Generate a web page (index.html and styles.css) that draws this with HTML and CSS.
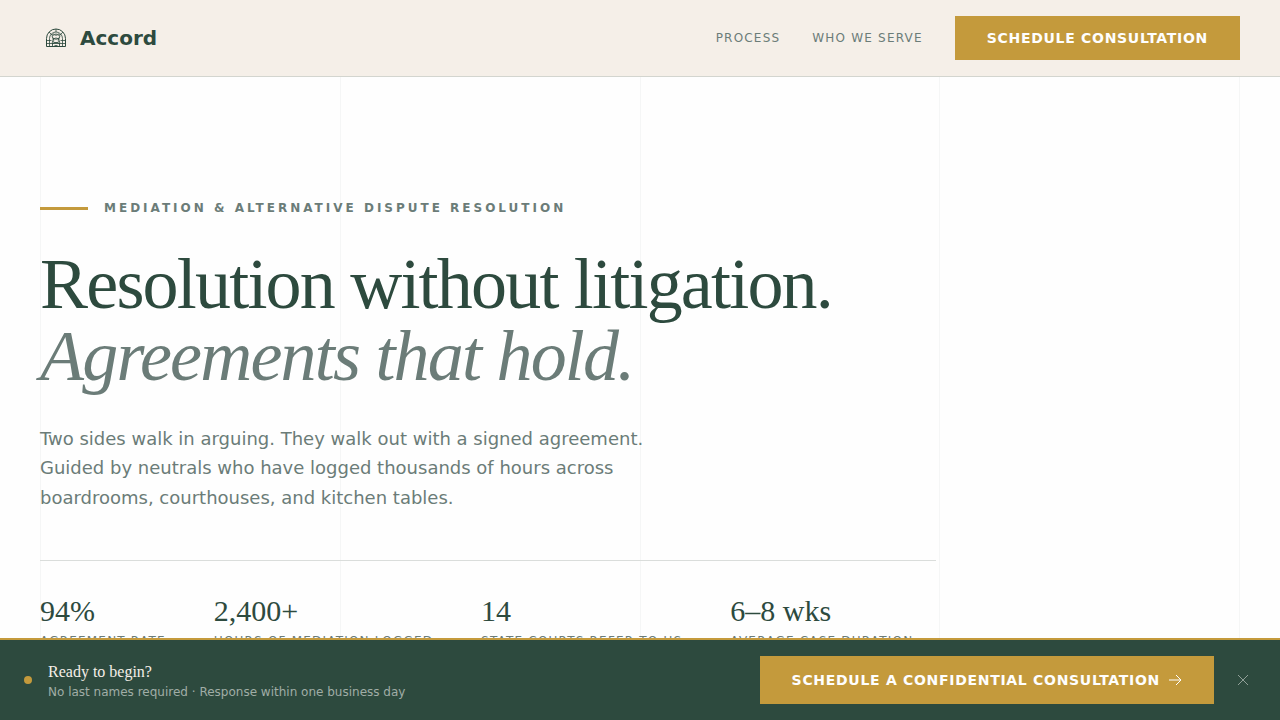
FILE: index.html
```
<!DOCTYPE html>
<html lang="en">
<head>
    <meta charset="utf-8">
    <meta name="viewport" content="width=device-width, initial-scale=1">
    <title>Accord</title>
    <link rel="stylesheet" href="styles.css">
</head>
<body>
    <header class="site-header">
        <a class="brand" href="#">
            <svg class="brand-icon" viewBox="0 0 24 24" fill="none" stroke="currentColor" aria-hidden="true">
                <path d="M2.500 20.500V12.500a9.500 9.500 0 0 1 19 0v8z"/>
                <g stroke-width="0.8">
                    <path d="M5.500 20.500v-8a6.500 6.500 0 0 1 13 0v8"/>
                    <path d="M2.500 14.500h5M16.500 14.500h5M2.500 17.500h19"/>
                    <path d="M12 3v3M5 6l3 3M19 6l-3 3M8.500 17v3.500M15.500 17v3.500"/>
                    <path d="M9 7.500q3 3.500 6 0M8.500 10q3.500-4 7 0M8 11.500q4 3.500 8 0M8 14.500q4-5 8 0M8 15q4 3.500 8 0M8 18.500q4-4 8 0M9.500 20.500q2.500-2.500 5 0"/>
                    <path d="M9 8q-2 2 0 4t-1 5M15 8q2 2 0 4t1 5"/>
                </g>
            </svg>
            <span class="brand-name">Accord</span>
        </a>
        <nav class="site-nav">
            <a class="nav-link" href="#process">Process</a>
            <a class="nav-link" href="#serve">Who We Serve</a>
            <a class="btn" href="#schedule">Schedule Consultation</a>
        </nav>
    </header>
    <main class="hero">
        <div class="grid-lines" aria-hidden="true">
            <span></span><span></span><span></span><span></span><span></span>
        </div>
        <div class="hero-content">
            <p class="eyebrow">Mediation &amp; Alternative Dispute Resolution</p>
            <h1>Resolution without litigation.<br><em>Agreements that hold.</em></h1>
            <p class="lead">Two sides walk in arguing. They walk out with a signed agreement. Guided by neutrals who have logged thousands of hours across boardrooms, courthouses, and kitchen tables.</p>
            <dl class="stats">
                <div class="stat">
                    <dt>Agreement rate</dt>
                    <dd>94%</dd>
                </div>
                <div class="stat">
                    <dt>Hours of mediation logged</dt>
                    <dd>2,400+</dd>
                </div>
                <div class="stat">
                    <dt>State courts refer to us</dt>
                    <dd>14</dd>
                </div>
                <div class="stat">
                    <dt>Average case duration</dt>
                    <dd>6–8 wks</dd>
                </div>
            </dl>
        </div>
    </main>
    <aside class="cta-bar">
        <span class="dot"></span>
        <div class="cta-text">
            <p class="cta-title">Ready to begin?</p>
            <p class="cta-note">No last names required · Response within one business day</p>
        </div>
        <a class="btn btn-large" href="#schedule">
            Schedule a Confidential Consultation
            <svg class="arrow" viewBox="0 0 14 14" fill="none" stroke="currentColor" aria-hidden="true">
                <path d="M1 7h12M8 2l5 5-5 5"/>
            </svg>
        </a>
        <button class="close" type="button" aria-label="Dismiss">
            <svg viewBox="0 0 18 18" fill="none" stroke="currentColor" aria-hidden="true">
                <path d="M4 4l10 10M14 4L4 14"/>
            </svg>
        </button>
    </aside>
</body>
</html>
```
FILE: styles.css
```
:root {
    --green: #2d4a3e;
    --sage: #6b7c78;
    --gold: #c49a3c;
    --cream: #f5efe8;
    --paper: #fefefe;
    --sans: "DejaVu Sans", Verdana, sans-serif;
    --serif: "Liberation Serif", "Times New Roman", serif;
}
* {
    box-sizing: border-box;
    margin: 0;
    padding: 0;
}
body {
    background: var(--paper);
    color: var(--green);
    font-family: var(--sans);
}
a {
    color: inherit;
    text-decoration: none;
}

/* Header */
.site-header {
    position: fixed;
    top: 0;
    left: 0;
    right: 0;
    z-index: 10;
    display: flex;
    align-items: center;
    justify-content: space-between;
    padding: 16px 40px;
    background: var(--cream);
    border-bottom: 1px solid #d3d5cf;
}
.brand {
    display: flex;
    align-items: center;
    gap: 8px;
}
.brand-icon {
    width: 32px;
    height: 32px;
    padding: 4px;
}
.brand-name {
    font-size: 20px;
    line-height: 28px;
    font-weight: bold;
}
.site-nav {
    display: flex;
    align-items: center;
    gap: 32px;
}
.nav-link {
    color: var(--sage);
    font-size: 12px;
    line-height: 16px;
    letter-spacing: 0.1em;
    text-transform: uppercase;
}
.btn {
    display: inline-flex;
    align-items: center;
    gap: 8px;
    padding: 12px 32px;
    background: var(--gold);
    color: var(--paper);
    font-size: 14px;
    line-height: 20px;
    font-weight: bold;
    letter-spacing: 0.05em;
    text-transform: uppercase;
}
.btn-large {
    padding: 14px 32px;
}

/* Hero */
.hero {
    position: relative;
    padding: 200px 40px 120px;
}
.grid-lines {
    position: absolute;
    top: 0;
    bottom: 0;
    left: 40px;
    right: 40px;
    display: flex;
    justify-content: space-between;
}
.grid-lines span {
    width: 1px;
    background: #f5f6f6;
}
.hero-content {
    position: relative;
    max-width: 896px;
}
.eyebrow {
    display: flex;
    align-items: center;
    gap: 16px;
    margin-bottom: 32px;
    color: var(--sage);
    font-size: 12px;
    line-height: 16px;
    font-weight: bold;
    letter-spacing: 0.25em;
    text-transform: uppercase;
}
.eyebrow::before {
    content: "";
    width: 48px;
    height: 3px;
    background: var(--gold);
}
h1 {
    margin-bottom: 32px;
    font-family: var(--serif);
    font-size: 72px;
    line-height: 1;
    font-weight: normal;
    letter-spacing: -0.025em;
}
h1 em {
    color: var(--sage);
}
.lead {
    max-width: 640px;
    margin-bottom: 48px;
    color: var(--sage);
    font-size: 18px;
    line-height: 1.625;
}
.stats {
    display: flex;
    flex-wrap: wrap;
    gap: 32px 48px;
    padding-top: 32px;
    border-top: 1px solid #dadddb;
}
.stat {
    display: flex;
    flex-direction: column-reverse;
    gap: 4px;
}
.stat dd {
    font-family: var(--serif);
    font-size: 30px;
    line-height: 36px;
}
.stat dt {
    color: var(--sage);
    font-size: 12px;
    line-height: 16px;
    letter-spacing: 0.1em;
    text-transform: uppercase;
}

/* Sticky bar */
.cta-bar {
    position: fixed;
    bottom: 0;
    left: 0;
    right: 0;
    z-index: 10;
    display: flex;
    align-items: center;
    gap: 16px;
    padding: 16px 24px;
    background: var(--green);
    border-top: 2px solid var(--gold);
}
.dot {
    width: 8px;
    height: 8px;
    border-radius: 50%;
    background: var(--gold);
}
.cta-text {
    flex: 1;
}
.cta-title {
    color: var(--cream);
    font-family: var(--serif);
    font-size: 16px;
    line-height: 24px;
}
.cta-note {
    color: #a0ada6;
    font-size: 12px;
    line-height: 16px;
}
.arrow {
    width: 14px;
    height: 14px;
}
.close {
    display: flex;
    padding: 4px;
    border: none;
    background: none;
    color: #91a098;
    cursor: pointer;
}
.close svg {
    width: 18px;
    height: 18px;
}
```
